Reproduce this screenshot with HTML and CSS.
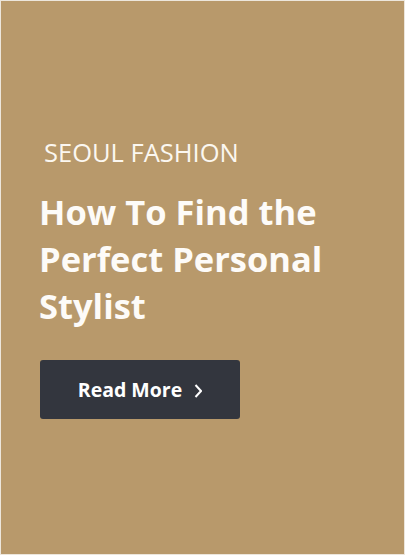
FILE: index.html
```html
<!DOCTYPE html>
<html>
<head>
<meta charset="utf-8">
<link rel="stylesheet" href="styles.css">
</head>
<body>
<div class="card">
  <div class="content">
    <div class="kicker">SEOUL FASHION</div>
    <h1 class="title">How To Find the Perfect Personal Stylist</h1>
    <a class="btn" href="#">Read More
      <svg class="chev" width="8" height="16" viewBox="0 0 8 16"><path d="M1.5 2 L7 8 L1.5 14" fill="none" stroke="#fff" stroke-width="2"/></svg>
    </a>
  </div>
</div>
</body>
</html>
```
FILE: styles.css
```css
html, body { margin: 0; padding: 0; }
body { width: 405px; height: 555px; background: #ece6dc; font-family: "Open Sans", "Noto Sans", sans-serif; }
.card { box-sizing: border-box; margin: 1px; width: 403px; height: 553px; background: #b8996b; padding: 134px 39px 0 39px; }
.kicker { color: #fbf7f0; font-size: 25.5px; line-height: 34px; padding-left: 4px; letter-spacing: 0; }
.title { margin: 19px 0 0 -1px; color: #fdfbf8; font-size: 34.5px; font-weight: 700; line-height: 47px; width: 300px; }
.btn { margin-top: 31px; display: flex; align-items: center; justify-content: center; gap: 12px; width: 200px; height: 59px; background: #33363e; border-radius: 3px; color: #fff; font-size: 19.5px; font-weight: 700; text-decoration: none; }
.chev { margin-top: 2px; }
```
